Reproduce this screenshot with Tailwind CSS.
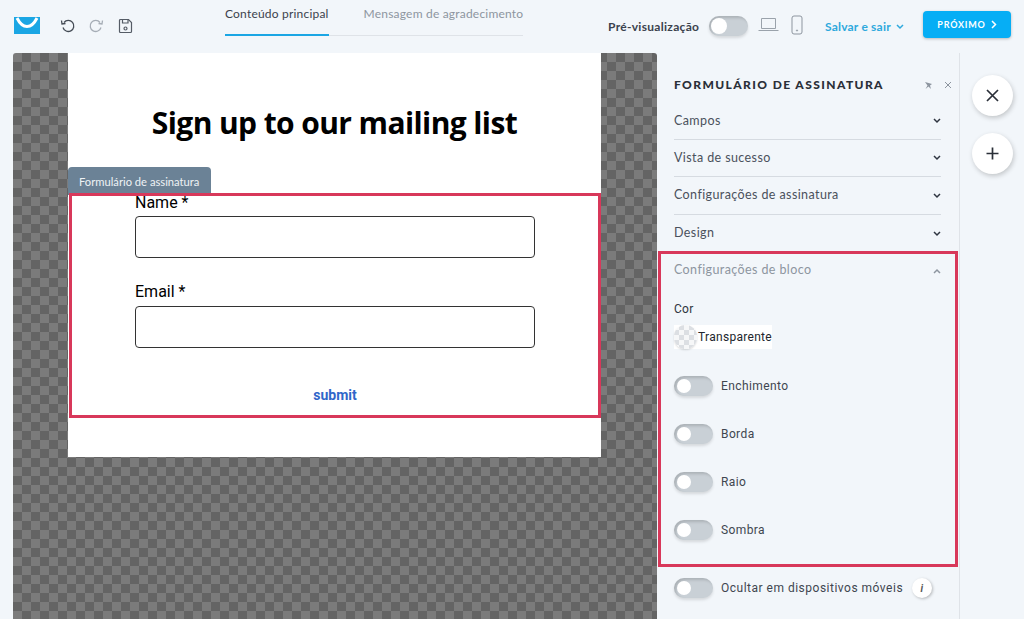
<!DOCTYPE html>
<html lang="en">
<head>
    <meta charset="UTF-8">
    <title>Formulário de assinatura</title>
    <script src="https://cdn.jsdelivr.net/npm/@tailwindcss/browser@4"></script>
</head>
<body class="bg-[#f2f6fa] font-['Lato',sans-serif] text-[#2f3540] h-[619px] w-[1024px] overflow-hidden">
    <!-- top bar -->
    <header class="h-[53px] flex relative">
        <svg class="absolute left-[14px] top-[17px]" width="26" height="17" viewBox="0 0 26 17">
            <rect width="26" height="17" fill="#1ba6e4"/>
            <path d="M3 1c3 6 7 8.500 10 8.500s7-2.500 10-8.500" fill="none" stroke="#fff" stroke-width="3"/>
        </svg>
        <svg class="absolute left-[60px] top-[18px]" width="16" height="16" viewBox="0 0 16 16" fill="none" stroke="#444b55" stroke-width="1.300">
            <path d="M4 4.500a5.500 5.500 0 1 1-1 5"/><path d="M1.500 2.500l.5 3.500 3.500-.5"/>
        </svg>
        <svg class="absolute left-[88px] top-[18px]" width="16" height="16" viewBox="0 0 16 16" fill="none" stroke="#a6adb6" stroke-width="1.300">
            <path d="M12 4.500a5.500 5.500 0 1 0 1 5"/><path d="M14.500 2.500l-.5 3.500-3.500-.5"/>
        </svg>
        <svg class="absolute left-[118px] top-[18px]" width="15" height="16" viewBox="0 0 15 16" fill="none" stroke="#555c66" stroke-width="1.200">
            <path d="M2.500 1.500h8l3 3v9a1 1 0 0 1-1 1h-10a1 1 0 0 1-1-1v-11a1 1 0 0 1 1-1z"/><path d="M4.500 1.500v3.500h5.500v-3.500"/><circle cx="7.500" cy="10.500" r="1.500"/>
        </svg>

        <div class="absolute left-[225px] top-0 w-[298px] h-[36px] flex border-b border-[#dfe3e8] text-[12px] tracking-[0.2px]">
            <div class="w-[104px] h-[36px] pt-[5px] border-b-2 border-[#1ba6e4] text-[#3b424d] whitespace-nowrap">Conteúdo principal</div>
            <div class="pl-[35px] pt-[5px] text-[#8d959f] whitespace-nowrap">Mensagem de agradecimento</div>
        </div>

        <div class="absolute left-[608px] top-[18px] text-[12px] font-bold tracking-[0.3px] text-[#3b424d] whitespace-nowrap">Pré-visualização</div>
        <div class="absolute left-[709px] top-[16px] w-[39px] h-[20px] rounded-full bg-[#c9d0d6] shadow-[inset_2px_2px_3px_rgba(0,0,0,0.15),0_2px_3px_rgba(0,0,0,0.12)]">
            <div class="ml-[2px] mt-[2px] w-[16px] h-[16px] rounded-full bg-white"></div>
        </div>
        <svg class="absolute left-[758px] top-[17px]" width="21" height="15" viewBox="0 0 21 15" fill="none" stroke="#9aa2ab" stroke-width="1">
            <path d="M3.500 1.500h14v10h-14z"/><path d="M.5 13.500h20"/>
        </svg>
        <svg class="absolute left-[791px] top-[15px]" width="12" height="20" viewBox="0 0 12 20" fill="none" stroke="#8d959f" stroke-width="1">
            <rect x="1" y="1" width="10" height="18" rx="2"/><circle cx="6" cy="15.500" r=".6"/>
        </svg>
        <div class="absolute left-[825px] top-[18px] flex items-center gap-[5px] text-[12px] font-bold tracking-[0.2px] text-[#2fa9dd] whitespace-nowrap">
            Salvar e sair
            <svg width="8" height="6" viewBox="0 0 8 6" fill="none" stroke="#2fa9dd" stroke-width="1.500"><path d="M1 1l3 3 3-3"/></svg>
        </div>
        <div class="absolute left-[923px] top-[11px] w-[88px] h-[27px] rounded-[4px] bg-[#06aef5] shadow-[0_1px_3px_rgba(0,0,0,0.25)] flex items-center justify-center gap-[5px] text-white text-[9px] font-bold tracking-[0.8px]">
            PRÓXIMO
            <svg width="6" height="9" viewBox="0 0 6 9" fill="none" stroke="#fff" stroke-width="1.500"><path d="M1 1l3.500 3.500-3.500 3.500"/></svg>
        </div>
    </header>

    <div class="flex h-[566px]">
        <div class="w-[13px]"></div>
        <!-- canvas -->
        <main class="w-[644px] h-[566px] rounded-t-[3px] bg-[repeating-conic-gradient(#646464_0_25%,#7b7b7b_0_50%)] bg-[length:18px_18px] pl-[55px]">
            <section class="relative w-[533px] h-[404px] bg-white text-black">
                <h1 class="absolute top-[48px] left-0 w-full text-center font-['Open_Sans',sans-serif] text-[30px] leading-[44px] font-bold tracking-[-0.6px]">Sign up to our mailing list</h1>
                <div class="absolute left-0 top-[114px] w-[143px] h-[28px] rounded-t-[4px] bg-[#6b8296] text-[#eef2f5] text-[11.200px] pl-[11px] pt-[7px] whitespace-nowrap">Formulário de assinatura</div>
                <div class="absolute left-[67px] top-[140px] w-[400px] font-['Roboto',sans-serif] text-[16px]">
                    <div class="leading-[20px]">Name *</div>
                    <div class="mt-[3px] h-[42px] rounded-[4px] border border-[#333]"></div>
                    <div class="mt-[24px] leading-[20px]">Email *</div>
                    <div class="mt-[4px] h-[42px] rounded-[4px] border border-[#333]"></div>
                    <div class="mt-[37px] text-center text-[14px] font-bold text-[#2f66c9]">submit</div>
                </div>
                <div class="absolute left-[1px] top-[140px] w-[532px] h-[225px] border-[3px] border-[#d8385a]"></div>
            </section>
        </main>

        <!-- settings panel -->
        <aside class="relative w-[303px] h-[566px] border-r border-[#dfe3e8] pl-[17px] pr-[18px] text-[12.500px] tracking-[0.4px]">
            <div class="flex items-center h-[22px] mt-[21px]">
                <div class="flex-1 text-[12px] font-black tracking-[1.400px] text-[#2a2f38] whitespace-nowrap">FORMULÁRIO DE ASSINATURA</div>
                <svg width="9" height="9" viewBox="0 0 9 9" fill="#8d959f"><path d="M1 1l7 2-2 1.500 1 3.500-2.500-2.500-3 2.500 2-3.500z"/></svg>
                <svg class="ml-[11px] mr-[-11px]" width="8" height="8" viewBox="0 0 8 8" fill="none" stroke="#8d959f" stroke-width="1"><path d="M1 1l6 6M7 1l-6 6"/></svg>
            </div>
            <div class="flex items-center justify-between h-[37px] mt-[7px] border-b border-[#d6dbe1] text-[#4a515c]">
                Campos
                <svg width="8" height="6" viewBox="0 0 8 6" fill="none" stroke="#2f3540" stroke-width="1.500"><path d="M1 1l3 3 3-3"/></svg>
            </div>
            <div class="flex items-center justify-between h-[37px] border-b border-[#d6dbe1] text-[#4a515c]">
                Vista de sucesso
                <svg width="8" height="6" viewBox="0 0 8 6" fill="none" stroke="#2f3540" stroke-width="1.500"><path d="M1 1l3 3 3-3"/></svg>
            </div>
            <div class="flex items-center justify-between h-[38px] border-b border-[#d6dbe1] text-[#4a515c]">
                Configurações de assinatura
                <svg width="8" height="6" viewBox="0 0 8 6" fill="none" stroke="#2f3540" stroke-width="1.500"><path d="M1 1l3 3 3-3"/></svg>
            </div>
            <div class="flex items-center justify-between h-[37px] text-[#4a515c]">
                Design
                <svg width="8" height="6" viewBox="0 0 8 6" fill="none" stroke="#2f3540" stroke-width="1.500"><path d="M1 1l3 3 3-3"/></svg>
            </div>
            <div class="flex items-center justify-between h-[37px] text-[#8d959f]">
                Configurações de bloco
                <svg width="8" height="6" viewBox="0 0 8 6" fill="none" stroke="#8d959f" stroke-width="1.500"><path d="M1 5l3-3 3 3"/></svg>
            </div>

            <div class="mt-[12px] font-['Roboto',sans-serif] tracking-[0.3px] text-[12px] leading-[16px] text-[#2f3540]">Cor</div>
            <div class="mt-[8px] h-[24px] w-[98px] flex items-center bg-white font-['Roboto',sans-serif] text-[12px] tracking-[0.3px]">
                <div class="w-[24px] h-[24px] rounded-full bg-[repeating-conic-gradient(#dcdfe3_0_25%,#f6f7f8_0_50%)] bg-[length:10px_10px] shadow-[0_1px_2px_rgba(0,0,0,0.15)]"></div>
                <span class="ml-[1px] text-[#22262d]">Transparente</span>
            </div>

            <div class="mt-[27px] flex flex-col gap-[28px] font-['Roboto',sans-serif] text-[12px] tracking-[0.4px] text-[#3f4650]">
                <div class="flex items-center h-[20px] gap-[8px]"><div class="w-[39px] h-[20px] rounded-full bg-[#c9d0d6] shadow-[inset_2px_2px_3px_rgba(0,0,0,0.15),0_2px_3px_rgba(0,0,0,0.12)] p-[3px]"><div class="w-[14px] h-[14px] rounded-full bg-white"></div></div>Enchimento</div>
                <div class="flex items-center h-[20px] gap-[8px]"><div class="w-[39px] h-[20px] rounded-full bg-[#c9d0d6] shadow-[inset_2px_2px_3px_rgba(0,0,0,0.15),0_2px_3px_rgba(0,0,0,0.12)] p-[3px]"><div class="w-[14px] h-[14px] rounded-full bg-white"></div></div>Borda</div>
                <div class="flex items-center h-[20px] gap-[8px]"><div class="w-[39px] h-[20px] rounded-full bg-[#c9d0d6] shadow-[inset_2px_2px_3px_rgba(0,0,0,0.15),0_2px_3px_rgba(0,0,0,0.12)] p-[3px]"><div class="w-[14px] h-[14px] rounded-full bg-white"></div></div>Raio</div>
                <div class="flex items-center h-[20px] gap-[8px]"><div class="w-[39px] h-[20px] rounded-full bg-[#c9d0d6] shadow-[inset_2px_2px_3px_rgba(0,0,0,0.15),0_2px_3px_rgba(0,0,0,0.12)] p-[3px]"><div class="w-[14px] h-[14px] rounded-full bg-white"></div></div>Sombra</div>
                <div class="flex items-center h-[20px] gap-[8px] mt-[10px] whitespace-nowrap"><div class="w-[39px] h-[20px] rounded-full bg-[#c9d0d6] shadow-[inset_2px_2px_3px_rgba(0,0,0,0.15),0_2px_3px_rgba(0,0,0,0.12)] p-[3px]"><div class="w-[14px] h-[14px] rounded-full bg-white"></div></div><span class="tracking-[0.5px]">Ocultar em dispositivos móveis</span><div class="w-[20px] h-[20px] ml-[1px] rounded-full bg-white shadow-[1px_1px_3px_rgba(0,0,0,0.25)] flex items-center justify-center text-[10px] italic font-bold text-[#555]">i</div></div>
            </div>

            <div class="absolute left-[1px] top-[198px] w-[300px] h-[316px] border-[3px] border-[#d8385a]"></div>
        </aside>

        <!-- round actions -->
        <div class="flex-1 flex flex-col items-center gap-[17px] pt-[22px]">
            <div class="w-[41px] h-[41px] rounded-full bg-white shadow-[1px_2px_5px_rgba(0,0,0,0.2)] flex items-center justify-center">
                <svg width="13" height="13" viewBox="0 0 13 13" fill="none" stroke="#2a2f38" stroke-width="1.700"><path d="M1 1l11 11M12 1l-11 11"/></svg>
            </div>
            <div class="w-[41px] h-[41px] rounded-full bg-white shadow-[1px_2px_5px_rgba(0,0,0,0.2)] flex items-center justify-center">
                <svg width="13" height="13" viewBox="0 0 13 13" fill="none" stroke="#2a2f38" stroke-width="1.700"><path d="M6.500 0.500v12M0.500 6.500h12"/></svg>
            </div>
        </div>
    </div>
</body>
</html>
